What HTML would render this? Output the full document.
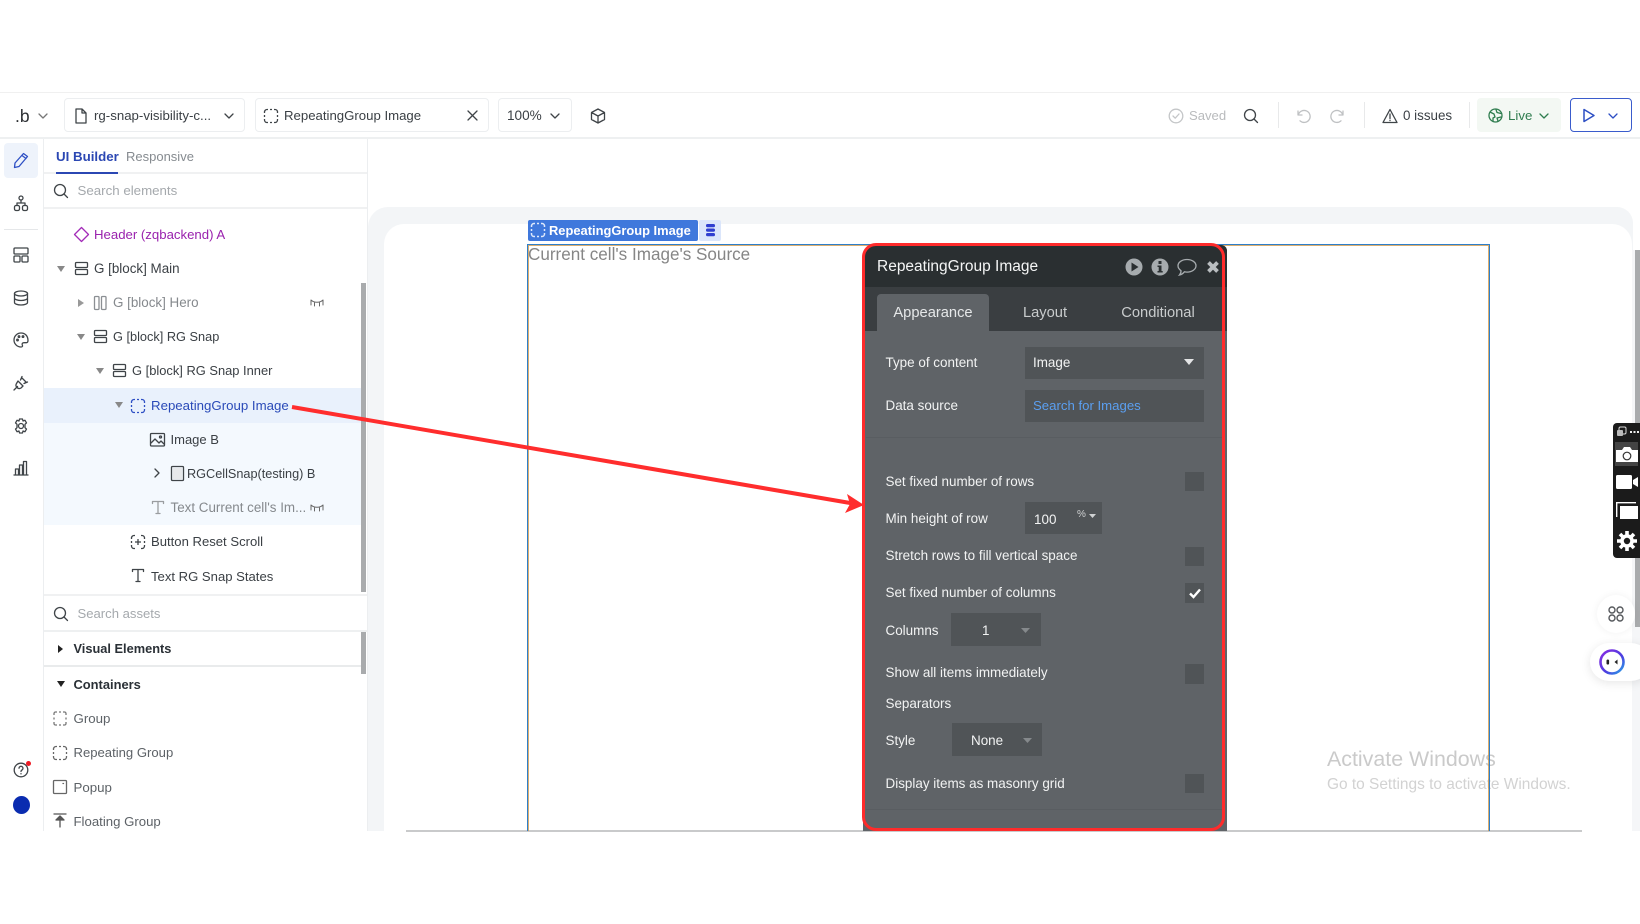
<!DOCTYPE html>
<html><head><meta charset="utf-8"><style>
html,body{margin:0;padding:0;background:#fff}
#r{position:relative;width:1640px;height:924px;overflow:hidden;background:#fff;font-family:"Liberation Sans",sans-serif;color:#3b4045;filter:blur(.3px)}
#r div{position:absolute}
.t{white-space:nowrap;line-height:20px;height:20px;font-size:13.3px}
.box{border:1px solid #eceef0;border-radius:4px;box-sizing:border-box;background:#fff}
.l{color:#f2f3f3;font-size:13.45px}
.f{background:#505457}
.cb{left:1185px;width:19px;height:19px;background:#505457}
svg{position:absolute;overflow:visible}
.ic{fill:none;stroke:#3f4448;stroke-width:1.3;stroke-linecap:round;stroke-linejoin:round}
.ic .d{stroke-linecap:butt}
</style></head><body><div id="r">

<!-- top bar -->
<div style="left:0;top:92px;width:1640px;height:47px;border-top:1px solid #f0f0f0;border-bottom:2px solid #eef0f1;box-sizing:border-box"></div>
<div class="t" style="left:15px;top:106px;font-size:17.5px;color:#2c2f33">.b</div>
<svg class="ic" style="left:38px;top:113px" width="10" height="6"><path d="M1 1l4 4 4-4" stroke="#777"/></svg>
<div class="box" style="left:64px;top:98px;width:181px;height:34px"></div>
<svg class="ic" style="left:75px;top:108px" width="12" height="16"><path d="M1 1h6l4 4v10H1zM7 1v4h4"/></svg>
<div class="t" style="left:94px;top:106px;font-size:13.25px">rg-snap-visibility-c...</div>
<svg class="ic" style="left:224px;top:113px" width="10" height="6"><path d="M1 1l4 4 4-4"/></svg>
<div class="box" style="left:255px;top:98px;width:234px;height:34px"></div>
<svg class="ic" style="left:263px;top:108px" width="16" height="16"><path class="d" d="M1.500 5V4a2.500 2.500 0 0 1 2.500-2.500h1M7 1.500h2M11 1.500h1a2.500 2.500 0 0 1 2.500 2.500v1M14.500 7v2M14.500 11v1a2.500 2.500 0 0 1-2.500 2.500h-1M9 14.500H7M5 14.500H4A2.500 2.500 0 0 1 1.500 12v-1M1.500 9V7"/></svg>
<div class="t" style="left:284px;top:106px;font-size:13.2px">RepeatingGroup Image</div>
<svg class="ic" style="left:467px;top:110px" width="11" height="11"><path d="M1 1l9 9M10 1l-9 9"/></svg>
<div class="box" style="left:498px;top:98px;width:74px;height:34px"></div>
<div class="t" style="left:507px;top:106px;font-size:13.6px">100%</div>
<svg class="ic" style="left:550px;top:113px" width="10" height="6"><path d="M1 1l4 4 4-4"/></svg>
<svg class="ic" style="left:590px;top:108px" width="16" height="16"><path d="M8 1l6.500 3.500v7L8 15l-6.500-3.500v-7zM1.500 4.500L8 8l6.500-3.500M8 8v7"/></svg>

<svg class="ic" style="left:1168px;top:108px" width="16" height="16"><circle cx="8" cy="8" r="6.800" stroke="#c4c6c8"/><path d="M5 8l2.200 2.200L11 6" stroke="#c4c6c8"/></svg>
<div class="t" style="left:1189px;top:106px;color:#b9bbbd;font-size:13.1px">Saved</div>
<svg class="ic" style="left:1243px;top:108px" width="16" height="16"><circle cx="7" cy="7" r="5.500"/><path d="M11 11l3.500 3.500"/></svg>
<div style="left:1278px;top:102px;width:1px;height:26px;background:#e8e9ea"></div>
<svg class="ic" style="left:1295px;top:108px" width="16" height="16"><path d="M3 3v4h4M3.300 7A6 6 0 1 1 5 12.800" stroke="#bfc1c3"/></svg>
<svg class="ic" style="left:1330px;top:108px" width="16" height="16"><path d="M13 3v4H9M12.700 7A6 6 0 1 0 11 12.800" stroke="#bfc1c3"/></svg>
<div style="left:1364px;top:102px;width:1px;height:26px;background:#e8e9ea"></div>
<svg class="ic" style="left:1382px;top:108px" width="16" height="16"><path d="M8 1.500L15 14.500H1zM8 6v4.500M8 12.300v.3"/></svg>
<div class="t" style="left:1403px;top:106px;color:#3b4045;font-size:13.4px">0 issues</div>
<div style="left:1469px;top:102px;width:1px;height:26px;background:#e8e9ea"></div>
<div style="left:1477px;top:98px;width:84px;height:34px;background:#f3f8f3;border-radius:4px"></div>
<svg class="ic" style="left:1488px;top:108px" width="15" height="15"><circle cx="7.500" cy="7.500" r="6.500" stroke="#2f7d4f"/><path d="M2 4l4 2 1 3-2 1v3M8 1.500l1 3 4 1M10 13l-1-3 4-1" stroke="#2f7d4f"/></svg>
<div class="t" style="left:1508px;top:106px;color:#2f7d4f">Live</div>
<svg class="ic" style="left:1539px;top:113px" width="10" height="6"><path d="M1 1l4 4 4-4" stroke="#2f7d4f"/></svg>
<div style="left:1570px;top:98px;width:62px;height:34px;border:1.500px solid #3a5ccc;border-radius:4px;box-sizing:border-box"></div>
<svg class="ic" style="left:1582px;top:108px" width="14" height="15"><path d="M2 1.500l10 6-10 6z" stroke="#2d4fc4" stroke-width="1.500"/></svg>
<svg class="ic" style="left:1608px;top:113px" width="10" height="6"><path d="M1 1l4 4 4-4" stroke="#2d4fc4"/></svg>

<!-- left rail -->
<div style="left:43px;top:139px;width:1px;height:692px;background:#eceef0"></div>
<div style="left:4px;top:143px;width:34px;height:35px;background:#eef3fb;border-radius:4px"></div>
<svg class="ic" style="left:13px;top:152px" width="16" height="16"><path d="M10.500 1.500l4 3L6 14.500l-4.500 1 .5-4.500zM9 3.500l4 3" stroke="#2d4fc4"/></svg>
<svg class="ic" style="left:13px;top:195px" width="16" height="16"><rect x="6" y="1" width="4" height="4" rx="2"/><rect x="1.500" y="10.500" width="5" height="5" rx="1.500"/><rect x="9.500" y="10.500" width="5" height="5" rx="1.500"/><path d="M8 5v3M4 10.500V8h8v2.500"/></svg>
<div style="left:4px;top:229px;width:34px;height:1px;background:#e5e7e9"></div>
<svg class="ic" style="left:13px;top:247px" width="16" height="16"><rect x="1" y="1" width="14" height="6" rx="1"/><rect x="1" y="9" width="6" height="6" rx="1"/><rect x="9" y="9" width="6" height="6" rx="1"/></svg>
<svg class="ic" style="left:13px;top:290px" width="16" height="16"><ellipse cx="8" cy="3.500" rx="6.500" ry="2.500"/><path d="M1.500 3.500v9c0 1.400 2.900 2.500 6.500 2.500s6.500-1.100 6.500-2.500v-9M1.500 8c0 1.400 2.900 2.500 6.500 2.500s6.500-1.100 6.500-2.500"/></svg>
<svg class="ic" style="left:13px;top:332px" width="16" height="16"><path d="M8 1a7 7 0 0 0 0 14c1.500 0 1.800-1 1.300-2-.6-1.300.2-2.300 1.700-2.300h2.300c1 0 1.700-.9 1.700-2.200C15 3.800 12 1 8 1z"/><circle cx="4.500" cy="8" r=".8"/><circle cx="6" cy="4.600" r=".8"/><circle cx="10" cy="4.600" r=".8"/></svg>
<svg class="ic" style="left:13px;top:375px" width="16" height="16"><path d="M1 15l3.500-3.500M5 6l5 5-2 2c-1.500 1-3 .5-4-.5s-1.500-2.500-.5-4zM8 4l1-1 4 4-1 1M9 1.500L7.500 5M14.500 7L11 8.500"/></svg>
<svg class="ic" style="left:13px;top:418px" width="16" height="16"><circle cx="8" cy="8" r="2.500"/><path d="M6.500 1h3l.5 2 2-.7 1.500 2.600L12 6.300v3.400l1.500 1.400-1.500 2.600-2-.7-.5 2h-3l-.5-2-2 .7-1.500-2.600L4 9.700V6.300L2.500 4.900 4 2.300l2 .7z"/></svg>
<svg class="ic" style="left:13px;top:460px" width="16" height="16"><path d="M1 15h14M2.500 15V9h3v6M6.500 15V5h3v10M10.500 15V1.500h3V15"/></svg>
<svg class="ic" style="left:13px;top:762px" width="16" height="16"><circle cx="8" cy="8" r="6.800"/><path d="M6 6.200a2 2 0 1 1 3 1.800c-.7.400-1 .8-1 1.500M8 11.600v.3"/></svg>
<div style="left:25.500px;top:760.500px;width:5px;height:5px;background:#ee1c25;border-radius:50%"></div>
<div style="left:12.500px;top:796px;width:17px;height:18px;background:#0a2cb0;border-radius:50%"></div>

<!-- panel -->
<div style="left:367px;top:139px;width:1px;height:692px;background:#eceef0"></div>
<div class="t" style="left:56px;top:147px;font-weight:bold;color:#2b47b3;font-size:13.3px">UI Builder</div>
<div class="t" style="left:126px;top:147px;color:#868b90;font-size:13px">Responsive</div>
<div style="left:44px;top:172px;width:323px;height:2px;background:#f0f1f2"></div>
<div style="left:56px;top:172px;width:62px;height:2px;background:#2b47b3"></div>
<svg class="ic" style="left:53px;top:183px" width="16" height="16"><circle cx="7" cy="7" r="5.500"/><path d="M11 11l3.500 3.500"/></svg>
<div class="t" style="left:77.500px;top:181px;color:#a5a9ad;font-size:13.3px">Search elements</div>
<div style="left:44px;top:207px;width:323px;height:2px;background:#f0f1f2"></div>

<div style="left:44px;top:388px;width:317px;height:35px;background:#e9f1fc"></div>
<div style="left:44px;top:423px;width:317px;height:102px;background:#f4f9fe"></div>
<div style="left:361px;top:283px;width:5px;height:309px;background:#a9abad"></div>
<div style="left:361px;top:631px;width:5px;height:43px;background:#a9abad"></div>

<svg class="ic" style="left:74px;top:227px" width="15" height="15"><path d="M7.500 .5l7 7-7 7-7-7z" stroke="#a32bb8"/></svg>
<div class="t" style="left:94px;top:225px;color:#9a22ae;font-size:13.2px">Header (zqbackend) A</div>

<svg style="left:57px;top:266px" width="8" height="6"><path d="M0 0h8L4 6z" fill="#888"/></svg>
<svg class="ic" style="left:75px;top:262px" width="13" height="13"><rect x=".5" y=".5" width="12" height="5" rx="1"/><rect x=".5" y="7.500" width="12" height="5" rx="1"/></svg>
<div class="t" style="left:94px;top:259px;font-size:13.4px">G [block] Main</div>

<svg style="left:78px;top:299px" width="6" height="8"><path d="M0 0v8l6-4z" fill="#999"/></svg>
<svg class="ic" style="left:94px;top:296px" width="13" height="14"><g stroke="#8b8f93"><rect x=".5" y=".5" width="4.500" height="13" rx="1"/><rect x="7.500" y=".5" width="4.500" height="13" rx="1"/></g></svg>
<div class="t" style="left:113px;top:293px;color:#85898d;font-size:13.4px">G [block] Hero</div>
<svg class="ic" style="left:310px;top:299px" width="14" height="8"><path d="M1 1c3 3 9 3 12 0M1 1v5M4.500 3v4M9.500 3v4M13 1v5" stroke="#666" stroke-width="1"/></svg>

<svg style="left:77px;top:334px" width="8" height="6"><path d="M0 0h8L4 6z" fill="#888"/></svg>
<svg class="ic" style="left:94px;top:330px" width="13" height="13"><rect x=".5" y=".5" width="12" height="5" rx="1"/><rect x=".5" y="7.500" width="12" height="5" rx="1"/></svg>
<div class="t" style="left:113px;top:327px;font-size:12.75px">G [block] RG Snap</div>

<svg style="left:96px;top:368px" width="8" height="6"><path d="M0 0h8L4 6z" fill="#888"/></svg>
<svg class="ic" style="left:113px;top:364px" width="13" height="13"><rect x=".5" y=".5" width="12" height="5" rx="1"/><rect x=".5" y="7.500" width="12" height="5" rx="1"/></svg>
<div class="t" style="left:132px;top:361px;font-size:12.9px">G [block] RG Snap Inner</div>

<svg style="left:115px;top:402px" width="8" height="6"><path d="M0 0h8L4 6z" fill="#888"/></svg>
<svg class="ic" style="left:130px;top:398px" width="16" height="16"><path class="d" stroke="#2d4fc4" d="M1.500 5V4a2.500 2.500 0 0 1 2.500-2.500h1M7 1.500h2M11 1.500h1a2.500 2.500 0 0 1 2.500 2.500v1M14.500 7v2M14.500 11v1a2.500 2.500 0 0 1-2.500 2.500h-1M9 14.500H7M5 14.500H4A2.500 2.500 0 0 1 1.500 12v-1M1.500 9V7"/></svg>
<div class="t" style="left:151px;top:395.500px;color:#2a4ab8;font-size:13.25px">RepeatingGroup Image</div>

<svg class="ic" style="left:150px;top:433px" width="15" height="14"><rect x=".5" y=".5" width="14" height="12.500" rx="1"/><path d="M1 10l4-4 4 4 2-2 3 3"/><circle cx="10.500" cy="4" r="1"/></svg>
<div class="t" style="left:170.500px;top:430px;font-size:13px">Image B</div>

<svg class="ic" style="left:154px;top:468px" width="6" height="10"><path d="M1 1l4 4-4 4"/></svg>
<svg class="ic" style="left:171px;top:466px" width="13" height="15"><rect x=".5" y=".5" width="12" height="14" rx="1"/><rect x="2" y="2" width="9" height="11" fill="#e7e9eb" stroke="none"/></svg>
<div class="t" style="left:187px;top:464px;font-size:12.7px">RGCellSnap(testing) B</div>

<svg class="ic" style="left:152px;top:501px" width="12" height="13"><path d="M.5 2.500V.5h11v2M6 .5v12M4 12.500h4" stroke="#9a9da0"/></svg>
<div class="t" style="left:170.500px;top:498px;color:#85898d;font-size:13.4px">Text Current cell's Im...</div>
<svg class="ic" style="left:310px;top:504px" width="14" height="8"><path d="M1 1c3 3 9 3 12 0M1 1v5M4.500 3v4M9.500 3v4M13 1v5" stroke="#666" stroke-width="1"/></svg>

<svg class="ic" style="left:130px;top:534px" width="16" height="16"><path class="d" d="M1.500 5V4a2.500 2.500 0 0 1 2.500-2.500h1M11 1.500h1a2.500 2.500 0 0 1 2.500 2.500v1M14.500 7v2M14.500 11v1a2.500 2.500 0 0 1-2.500 2.500h-1M5 14.500H4A2.500 2.500 0 0 1 1.500 12v-1M1.500 9V7M8 5v6M5 8h6"/></svg>
<div class="t" style="left:151px;top:532px;font-size:13.1px">Button Reset Scroll</div>

<svg class="ic" style="left:132px;top:569px" width="12" height="13"><path d="M.5 2.500V.5h11v2M6 .5v12M4 12.500h4"/></svg>
<div class="t" style="left:151px;top:566.500px;font-size:13.1px">Text RG Snap States</div>

<div style="left:44px;top:594px;width:323px;height:2px;background:#f0f1f2"></div>
<svg class="ic" style="left:53px;top:606px" width="16" height="16"><circle cx="7" cy="7" r="5.500"/><path d="M11 11l3.500 3.500"/></svg>
<div class="t" style="left:77.500px;top:604px;color:#a5a9ad;font-size:13.1px">Search assets</div>
<div style="left:44px;top:630px;width:323px;height:2px;background:#eef0f1"></div>
<svg style="left:58px;top:645px" width="5" height="8"><path d="M0 0v8l5-4z" fill="#222"/></svg>
<div class="t" style="left:73.500px;top:639px;font-weight:bold;color:#2a3036;font-size:12.8px">Visual Elements</div>
<div style="left:44px;top:665px;width:317px;height:2px;background:#e9ebec"></div>
<svg style="left:56.500px;top:681px" width="8" height="6"><path d="M0 0h8L4 6z" fill="#222"/></svg>
<div class="t" style="left:73.500px;top:675px;font-weight:bold;color:#2a3036;font-size:12.9px">Containers</div>

<svg class="ic" style="left:53px;top:711px" width="14" height="15"><path class="d" stroke="#777" d="M1 4V2.500A1.500 1.500 0 0 1 2.500 1H4M6 1h2M10 1h1.500A1.500 1.500 0 0 1 13 2.500V4M13 6.500v2M13 11v1.500a1.500 1.500 0 0 1-1.500 1.500H10M8 14H6M4 14H2.500A1.500 1.500 0 0 1 1 12.500V11M1 8.500v-2"/></svg>
<div class="t" style="left:73.500px;top:709px;color:#5d6267">Group</div>
<svg class="ic" style="left:52px;top:745px" width="16" height="16"><path class="d" stroke="#666" d="M1.500 5V4a2.500 2.500 0 0 1 2.500-2.500h1M7 1.500h2M11 1.500h1a2.500 2.500 0 0 1 2.500 2.500v1M14.500 7v2M14.500 11v1a2.500 2.500 0 0 1-2.500 2.500h-1M9 14.500H7M5 14.500H4A2.500 2.500 0 0 1 1.500 12v-1M1.500 9V7"/></svg>
<div class="t" style="left:73.500px;top:743px;color:#5d6267;font-size:13.1px">Repeating Group</div>
<svg class="ic" style="left:53px;top:780px" width="14" height="14"><rect x=".5" y=".5" width="13" height="13" rx="1" stroke="#666"/><path d="M10 3.500h.5" stroke="#666"/></svg>
<div class="t" style="left:73.500px;top:777.500px;color:#5d6267">Popup</div>
<svg class="ic" style="left:54px;top:813px" width="12" height="15"><path d="M0 1h12M6 14V3M2 7l4-4 4 4z" fill="#555" stroke="#555"/></svg>
<div class="t" style="left:73.500px;top:811.500px;color:#5d6267;font-size:13.2px">Floating Group</div>

<!-- canvas -->
<div style="left:368px;top:207px;width:1265px;height:624px;background:#f3f5f7;border-radius:20px 16px 0 0"></div>
<div style="left:384px;top:224px;width:1248px;height:607px;background:#fff;border-radius:20px 20px 0 0"></div>
<div style="left:1632px;top:250px;width:8px;height:581px;background:#f5f6f8"></div>
<div style="left:1635px;top:250px;width:5px;height:377px;background:#a9abad"></div>
<div style="left:406px;top:830px;width:1176px;height:1.500px;background:#c9cacb"></div>

<div class="t" style="left:1327px;top:749px;font-size:21.4px;color:#cacaca">Activate Windows</div>
<div class="t" style="left:1327px;top:775px;font-size:15.45px;color:#d2d2d2">Go to Settings to activate Windows.</div>

<div style="left:527px;top:244px;width:963px;height:587px;border:1px solid #2f7fc9;border-bottom:0;box-sizing:border-box"></div>
<div style="left:528px;top:245px;width:961px;height:586px;border:1px solid #d0933f;border-bottom:0;box-sizing:border-box;opacity:.75"></div>
<div style="left:528px;top:220px;width:170px;height:21px;background:#3f78dc;border-radius:2px"></div>
<svg class="ic" style="left:530px;top:222px" width="16" height="16"><path class="d" stroke="#dfe9fb" stroke-width="1.500" d="M1.500 5V4a2.500 2.500 0 0 1 2.500-2.500h1M7 1.500h2M11 1.500h1a2.500 2.500 0 0 1 2.500 2.500v1M14.500 7v2M14.500 11v1a2.500 2.500 0 0 1-2.500 2.500h-1M9 14.500H7M5 14.500H4A2.500 2.500 0 0 1 1.500 12v-1M1.500 9V7"/></svg>
<div class="t" style="left:549px;top:220.500px;color:#fff;font-weight:bold;font-size:12.9px">RepeatingGroup Image</div>
<div style="left:699px;top:220px;width:22px;height:21px;background:#dbe6fb;border-radius:2px"></div>
<svg style="left:705.500px;top:224px" width="9" height="13"><g fill="#2f3fd0"><rect width="9" height="3.200" rx="1.500"/><rect y="4.500" width="9" height="3.200" rx="1.500"/><rect y="9" width="9" height="3.200" rx="1.500"/></g></svg>
<div class="t" style="left:528px;top:245px;font-size:17.1px;color:#868686">Current cell's Image's Source</div>

<!-- editor panel -->
<div style="left:863px;top:245px;width:364px;height:586px;background:#5f6367;border-radius:10px 6px 0 0;overflow:hidden">
  <div style="left:0;top:0;width:364px;height:42px;background:#2a2f31"></div>
  <div style="left:0;top:42px;width:364px;height:44px;background:#3a3e41"></div>
  <div style="left:14px;top:49px;width:112px;height:37px;background:#5f6367;border-radius:4px 4px 0 0"></div>
</div>
<div class="t" style="left:877px;top:257px;color:#f4f5f5;font-size:15.5px">RepeatingGroup Image</div>
<svg style="left:1125px;top:258px" width="18" height="18"><circle cx="9" cy="9" r="8.500" fill="#a6abae"/><path d="M6.500 4.500l7 4.500-7 4.500z" fill="#2a2f31"/></svg>
<svg style="left:1151px;top:258px" width="18" height="18"><circle cx="9" cy="9" r="8.500" fill="#a6abae"/><rect x="7.500" y="3" width="3" height="3" fill="#2a2f31"/><path d="M6.500 7.500h4v5.500h1.200v1.500H6.500V13h1.200V9H6.500z" fill="#2a2f31"/></svg>
<svg style="left:1177px;top:258px" width="20" height="19"><path d="M10 1.500c5 0 9 2.800 9 6.300s-4 6.300-9 6.300c-1 0-1.800-.1-2.600-.3-1 1.300-2.600 2.700-4.900 3.200 1-1.200 1.600-2.700 1.500-4.300C2 11.300 1 9.700 1 7.800 1 4.300 5 1.500 10 1.500z" fill="none" stroke="#a6abae" stroke-width="1.300"/></svg>
<svg style="left:1206px;top:260px" width="14" height="14"><path d="M2.500 2.500l9 9M11.500 2.500l-9 9" stroke="#b9bdc0" stroke-width="3.800"/></svg>

<div class="t" style="left:877px;width:112px;text-align:center;top:303px;color:#e6e8e9;font-size:14.7px">Appearance</div>
<div class="t" style="left:1010px;width:70px;text-align:center;top:303px;color:#c9cccd;font-size:14.7px">Layout</div>
<div class="t" style="left:1108px;width:100px;text-align:center;top:303px;color:#c9cccd;font-size:14.7px">Conditional</div>

<div class="t l" style="left:885.500px;top:353px">Type of content</div>
<div class="f" style="left:1025px;top:347px;width:179px;height:32px"></div>
<div class="t l" style="left:1033px;top:353px">Image</div>
<svg style="left:1184px;top:359px" width="10" height="6"><path d="M0 0h10L5 6z" fill="#e4e5e6"/></svg>
<div class="t l" style="left:885.500px;top:396px">Data source</div>
<div class="f" style="left:1025px;top:390px;width:179px;height:32px"></div>
<div class="t" style="left:1033px;top:396px;color:#5b9ff0;font-size:13.2px">Search for Images</div>
<div style="left:866px;top:437px;width:356px;height:1px;background:#595d61"></div>

<div class="t l" style="left:885.500px;top:472px">Set fixed number of rows</div>
<div class="cb" style="top:472px"></div>
<div class="t l" style="left:885.500px;top:508.500px">Min height of row</div>
<div class="f" style="left:1025px;top:502px;width:77px;height:32px"></div>
<div class="t l" style="left:1034px;top:510px">100</div>
<div class="t" style="left:1077px;top:505px;color:#d0d2d3;font-size:10px">%</div>
<svg style="left:1089px;top:514px" width="7" height="4"><path d="M0 0h7L3.500 4z" fill="#d0d2d3"/></svg>
<div class="t l" style="left:885.500px;top:545.500px">Stretch rows to fill vertical space</div>
<div class="cb" style="top:547px"></div>
<div class="t l" style="left:885.500px;top:583px">Set fixed number of columns</div>
<div class="cb" style="top:583px;height:20px"></div>
<svg style="left:1189px;top:587px" width="12" height="12"><path d="M1 6.500l3.500 3.500L11 2.500" fill="none" stroke="#fff" stroke-width="2.400"/></svg>
<div class="t l" style="left:885.500px;top:620.500px">Columns</div>
<div class="f" style="left:951px;top:613px;width:90px;height:33px"></div>
<div class="t l" style="left:982px;top:621px">1</div>
<svg style="left:1021px;top:628px" width="9" height="5"><path d="M0 0h9L4.500 5z" fill="#85898c"/></svg>
<div class="t l" style="left:885.500px;top:663px">Show all items immediately</div>
<div class="cb" style="top:664px;height:20px"></div>
<div class="t l" style="left:885.500px;top:694px">Separators</div>
<div class="t l" style="left:885.500px;top:730.500px">Style</div>
<div class="f" style="left:952px;top:723px;width:90px;height:33px"></div>
<div class="t l" style="left:971px;top:731px">None</div>
<svg style="left:1023px;top:738px" width="9" height="5"><path d="M0 0h9L4.500 5z" fill="#85898c"/></svg>
<div class="t l" style="left:885.500px;top:773.500px">Display items as masonry grid</div>
<div class="cb" style="top:774px"></div>
<div style="left:866px;top:809px;width:356px;height:1px;background:#595d61"></div>

<div style="left:862px;top:243px;width:363px;height:588px;border:3.500px solid #ff2b2b;border-radius:14px;box-sizing:border-box"></div>

<!-- arrow -->
<svg style="left:0;top:0" width="1640" height="924"><path d="M292 407L856 504" stroke="#ff2d2d" stroke-width="4" fill="none"/><path d="M864 505L847 494 850 504 845 513z" fill="#ff2d2d"/></svg>

<!-- right widgets -->
<div style="left:1613px;top:423px;width:27px;height:135px;background:#1b1b1b;border-radius:4px 0 0 4px"></div>
<svg style="left:1617px;top:427px" width="9" height="10"><rect x="2" y="0" width="7" height="7" rx="1.500" fill="none" stroke="#ddd"/><rect x="0" y="3" width="6" height="6" rx="1" fill="#bbb"/></svg>
<div style="left:1630px;top:431px;width:2px;height:2px;background:#eee;box-shadow:3.500px 0 #eee,7px 0 #eee"></div>
<div style="left:1615px;top:442px;width:23px;height:24px;background:#444"></div>
<svg style="left:1616px;top:446px" width="22" height="18"><path d="M0 4h6l2-3h6l2 3h6v12H0z" fill="#fff"/><circle cx="11" cy="10" r="3.800" fill="none" stroke="#333" stroke-width="1.200"/></svg>
<svg style="left:1616px;top:474px" width="22" height="16"><rect x="0" y="1" width="16" height="14" rx="1.500" fill="#fff"/><path d="M17 6l5-3v10l-5-3z" fill="#fff"/></svg>
<svg style="left:1616px;top:502px" width="22" height="18"><path d="M.7 15V.7H20" fill="none" stroke="#fff" stroke-width="1.400"/><rect x="4" y="4" width="18" height="13" fill="#fff"/></svg>
<svg style="left:1617px;top:531px" width="20" height="20"><circle cx="10" cy="10" r="5" fill="none" stroke="#fff" stroke-width="3.600"/><g stroke="#fff" stroke-width="3.600"><path d="M10 0v4M10 16v4M0 10h4M16 10h4M3 3l2.600 2.600M14.400 14.400L17 17M3 17l2.600-2.600M14.400 5.600L17 3"/></g></svg>

<div style="left:1597px;top:595px;width:38px;height:38px;border-radius:50%;background:#fff;box-shadow:0 0 8px rgba(0,0,0,.06)"></div>
<svg style="left:1608px;top:606px" width="16" height="16" fill="none" stroke="#55585c" stroke-width="1.400"><rect x="1" y="1" width="6" height="6" rx="3"/><rect x="9" y="1" width="6" height="6" rx="3"/><rect x="1" y="9" width="6" height="6" rx="3"/><rect x="9" y="9" width="6" height="6" rx="3"/></svg>
<div style="left:1590px;top:643px;width:60px;height:38px;border-radius:19px;background:#fff;box-shadow:0 2px 10px rgba(0,0,0,.1)"></div>
<svg style="left:1599px;top:649px" width="26" height="26"><defs><linearGradient id="g" x1="0" y1="0" x2="1" y2="1"><stop offset="0" stop-color="#8a2be2"/><stop offset=".6" stop-color="#4a3fe0"/><stop offset="1" stop-color="#28a8e8"/></linearGradient></defs><circle cx="13" cy="13" r="11.500" fill="#fff" stroke="url(#g)" stroke-width="2.600"/><rect x="7.500" y="10.500" width="2.600" height="5" rx="1.300" fill="#222"/><path d="M18.500 10.500l-3 2.500 3 2.500z" fill="#222"/></svg>

</div></body></html>
